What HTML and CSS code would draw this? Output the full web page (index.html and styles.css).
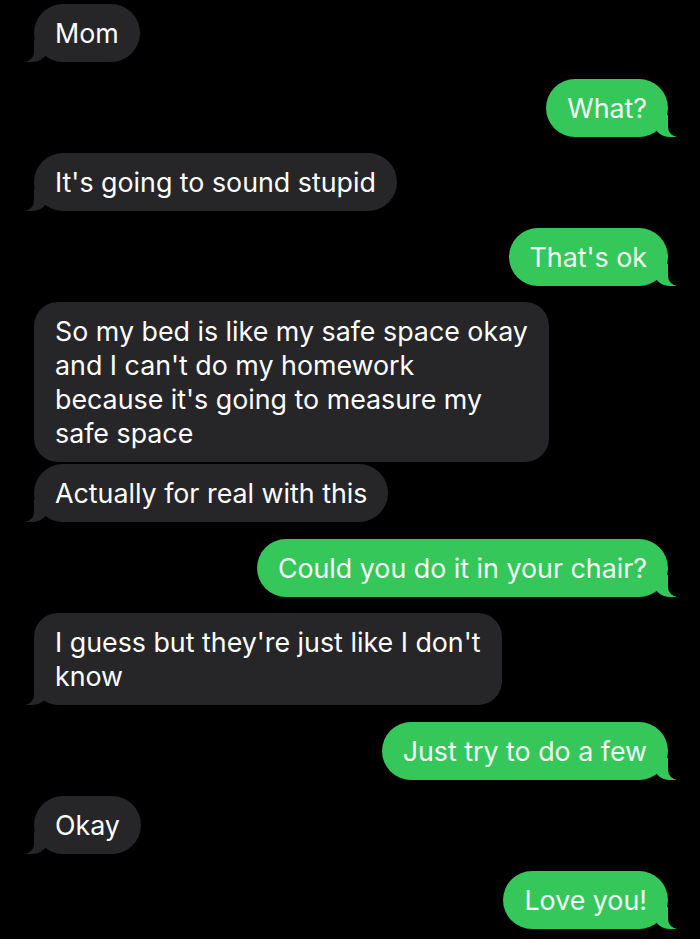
FILE: index.html
```html
<!DOCTYPE html>
<html lang="en">
<head>
    <meta charset="UTF-8">
    <meta name="viewport" content="width=device-width, initial-scale=1.0">
    <title>Messages</title>
    <link rel="stylesheet" href="styles.css">
</head>
<body>
    <div class="thread">
        <div class="msg in tail">Mom</div>
        <div class="msg out tail">What?</div>
        <div class="msg in tail">It's going to sound stupid</div>
        <div class="msg out tail">That's ok</div>
        <div class="group">
            <div class="msg in multi">So my bed is like my safe space okay<br>and I can't do my homework<br>because it's going to measure my<br>safe space</div>
            <div class="msg in tail">Actually for real with this</div>
        </div>
        <div class="msg out tail">Could you do it in your chair?</div>
        <div class="msg in multi tail">I guess but they're just like I don't<br>know</div>
        <div class="msg out tail">Just try to do a few</div>
        <div class="msg in tail">Okay</div>
        <div class="msg out tail">Love you!</div>
    </div>
</body>
</html>
```

FILE: styles.css
```css
body {
    margin: 0;
    background: #000;
    font-family: Inter, "Noto Sans", sans-serif;
    overflow: hidden;
}

.thread {
    display: flex;
    flex-direction: column;
    gap: 16.5px;
    padding: 4px 32px 0 34px;
}

.group {
    display: flex;
    flex-direction: column;
    gap: 2px;
}

.msg {
    position: relative;
    max-width: 540px;
    padding: 12px 21px;
    font-size: 26.8px;
    line-height: 34px;
    color: #fff;
    border-radius: 29px;
}

.msg.multi {
    border-radius: 24px;
}

.in {
    align-self: flex-start;
    background: #262628;
}

.out {
    align-self: flex-end;
    background: #35c759;
    color: #f4fff6;
}

/* bubble tails */
.tail::before,
.tail::after {
    content: "";
    position: absolute;
    bottom: 0;
    height: 22px;
}

.in.tail::before {
    left: -8px;
    width: 22px;
    background: #262628;
    border-bottom-right-radius: 16px 14px;
}

.in.tail::after {
    left: -10px;
    width: 10px;
    background: #000;
    border-bottom-right-radius: 10px;
}

.out.tail::before {
    right: -8px;
    width: 22px;
    background: #35c759;
    border-bottom-left-radius: 16px 14px;
}

.out.tail::after {
    right: -10px;
    width: 10px;
    background: #000;
    border-bottom-left-radius: 10px;
}
```
